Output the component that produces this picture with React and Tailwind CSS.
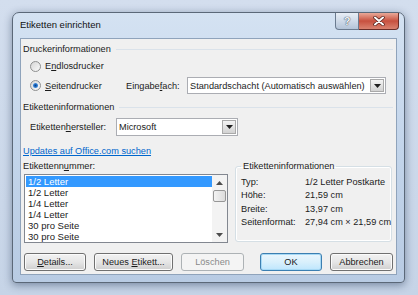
import React from 'react'

const listItems = ['1/2 Letter', '1/2 Letter', '1/4 Letter', '1/4 Letter', '30 pro Seite', '30 pro Seite']

const infoRows = [
  ['Typ:', '1/2 Letter Postkarte'],
  ['Höhe:', '21,59 cm'],
  ['Breite:', '13,97 cm'],
  ['Seitenformat:', '27,94 cm × 21,59 cm'],
]

function Header({ children }) {
  return (
    <div className="flex h-[12px] items-center pl-[2px] pr-[3px]">
      <span className="leading-[12px]">{children}</span>
      <div className="ml-[5px] h-px flex-1 bg-[#dae2ea]" />
    </div>
  )
}

function Radio({ checked, children }) {
  return (
    <div className="flex items-center gap-[4px]">
      <div className="flex h-[11px] w-[11px] items-center justify-center rounded-full border border-[#8e8f8f] bg-gradient-to-br from-[#d6d6d6] to-[#fafafa]">
        {checked && (
          <div className="h-[5px] w-[5px] rounded-full bg-[radial-gradient(circle,#0a3f86_0%,#2f7fd6_55%,#8cc6fb_100%)]" />
        )}
      </div>
      <span className="leading-[12px]">{children}</span>
    </div>
  )
}

function DownArrow() {
  return (
    <svg width="7" height="4" viewBox="0 0 7 4">
      <path d="M0 0h7L3.5 4z" fill="#1f1f1f" />
    </svg>
  )
}

function Combo({ text, className }) {
  return (
    <div className={'flex items-stretch border border-[#abadb3] bg-white ' + className}>
      <span className="flex-1 truncate pl-[2px] self-center leading-[12px]">{text}</span>
      <div className="my-px mr-px flex w-[14px] items-center justify-center border border-[#a9a9a9] bg-gradient-to-b from-[#f4f4f4] to-[#d2d2d2]">
        <DownArrow />
      </div>
    </div>
  )
}

function Button({ children, className = '', disabled, focused }) {
  return (
    <div
      className={
        'flex h-[18px] items-center justify-center rounded-[3px] border leading-[12px] ' +
        (disabled
          ? 'border-[#adb2b5] bg-[#f4f4f4] text-[#8a8a8a] '
          : focused
          ? 'border-[#3c7fb1] bg-gradient-to-b from-[#eaf6fd] via-[#d9f0fc] to-[#bee6fd] shadow-[inset_0_0_0_1px_#a7d9f5] '
          : 'border-[#707070] bg-gradient-to-b from-[#f2f2f2] via-[#e6e6e6] to-[#cfcfcf] shadow-[inset_0_0_0_1px_#fbfbfb] ') +
        className
      }
    >
      <span className="whitespace-nowrap">{children}</span>
    </div>
  )
}

export default function App() {
  return (
    <div className="h-[295px] w-[418px] bg-gradient-to-b from-[#d3deee] to-[#c6d4e7] p-[12px] font-['Liberation_Sans',Arial,sans-serif] text-[9.2px] text-[#1b1b1b]">
      <div className="flex h-[271px] w-[393px] flex-col rounded-t-[7px] rounded-b-[4px] border border-[#5b6878] bg-gradient-to-b from-[#d4e2f2] via-[#c3d5eb] to-[#b8cbe3] shadow-[0_2px_8px_rgba(20,40,70,0.45)]">
        {/* Title bar */}
        <div className="flex h-[25px] items-start justify-between">
          <span className="pl-[7px] pt-[6px] text-[9.5px] leading-[12px] text-[#111]">Etiketten einrichten</span>
          <div className="mr-[5px] flex">
            <div className="flex h-[17px] w-[24px] items-center justify-center rounded-bl-[4px] border border-t-0 border-[#6b7b8f] bg-gradient-to-b from-[#e8eef6] via-[#cfdae8] to-[#b4c4d8] text-[11px] font-bold text-[#f4f6f9] [text-shadow:0_0_1px_#3a4656,0_0_1px_#3a4656]">
              ?
            </div>
            <div className="flex h-[17px] w-[40px] items-center justify-center rounded-br-[4px] border border-l-0 border-t-0 border-[#6a2d28] bg-gradient-to-b from-[#e9a898] via-[#c7503f] to-[#d98270]">
              <svg width="12" height="10" viewBox="0 0 12 10">
                <path d="M2 1.5l8 7M10 1.5l-8 7" stroke="#4b1a15" strokeWidth="3.4" strokeLinecap="round" />
                <path d="M2 1.5l8 7M10 1.5l-8 7" stroke="#ffffff" strokeWidth="2" strokeLinecap="round" />
              </svg>
            </div>
          </div>
        </div>

        {/* Client area */}
        <div className="mx-[7px] flex flex-col border border-[#8fa3bb] bg-[#f0f0f0] pb-[3px] pt-[4px]">
          <Header>Druckerinformationen</Header>

          <div className="ml-[9px] mt-[5px] flex h-[12px] items-center">
            <Radio>
              E<u>n</u>dlosdrucker
            </Radio>
          </div>

          <div className="mt-[5px] flex h-[17px] items-center">
            <div className="ml-[9px] w-[96px]">
              <Radio checked>
                <u>S</u>eitendrucker
              </Radio>
            </div>
            <span className="w-[61px] leading-[12px]">
              Eingabe<u>f</u>ach:
            </span>
            <Combo text="Standardschacht (Automatisch auswählen)" className="h-[17px] w-[199px]" />
          </div>

          <div className="mt-[7px]">
            <Header>Etiketteninformationen</Header>
          </div>

          <div className="mt-[5px] flex h-[18px] items-center">
            <span className="ml-[9px] w-[86px] leading-[12px]">
              Etiketten<u>h</u>ersteller:
            </span>
            <Combo text="Microsoft" className="h-[18px] w-[122px]" />
          </div>

          <div className="ml-[2px] mt-[9px] h-[12px] leading-[12px]">
            <span className="text-[#0066cc] underline">Updates auf Office.com suchen</span>
          </div>

          <div className="mt-[3px] flex h-[83px] items-start">
            <div className="ml-[2px] flex flex-col">
              <span className="h-[12px] leading-[12px]">
                Etikettenn<u>u</u>mmer:
              </span>
              <div className="ml-px mt-[2px] flex h-[69px] w-[204px] border border-[#828790] bg-white">
                <div className="flex-1 pl-px pt-px">
                  {listItems.map((item, i) => (
                    <div
                      key={i}
                      className={
                        'h-[11px] pl-[2px] text-[9.5px] leading-[11px] ' + (i === 0 ? 'bg-[#3399ff] text-white' : '')
                      }
                    >
                      {item}
                    </div>
                  ))}
                </div>
                <div className="flex w-[15px] flex-col bg-[#f3f3f3]">
                  <div className="flex h-[15px] items-center justify-center">
                    <svg width="7" height="4" viewBox="0 0 7 4">
                      <path d="M0 4h7L3.5 0z" fill="#4d4d4d" />
                    </svg>
                  </div>
                  <div className="mx-px h-[12px] rounded-[2px] border border-[#979797] bg-gradient-to-r from-[#f3f3f3] to-[#dcdcdc]" />
                  <div className="flex-1" />
                  <div className="flex h-[15px] items-center justify-center">
                    <svg width="7" height="4" viewBox="0 0 7 4">
                      <path d="M0 0h7L3.5 4z" fill="#4d4d4d" />
                    </svg>
                  </div>
                </div>
              </div>
            </div>

            <fieldset className="ml-[7px] h-[82px] w-[157px] min-w-0 rounded-[3px] border border-[#d5dfe5] pl-[5px] shadow-[inset_0_0_0_1px_#ffffff]">
              <legend className="px-[2px] leading-[12px]">Etiketteninformationen</legend>
              <div className="mt-[4px] flex flex-col">
                {infoRows.map(([label, value]) => (
                  <div key={label} className="flex h-[13.5px] items-center whitespace-nowrap">
                    <span className="w-[64px] shrink-0">{label}</span>
                    <span>{value}</span>
                  </div>
                ))}
              </div>
            </fieldset>
          </div>

          <div className="mt-[10px] flex">
            <Button className="ml-[3px] w-[62px]">
              <u>D</u>etails...
            </Button>
            <Button className="ml-[8px] w-[79px]">
              Neues <u>E</u>tikett...
            </Button>
            <Button disabled className="ml-[8px] w-[63px]">
              Löschen
            </Button>
            <Button focused className="ml-[16px] w-[62px]">
              OK
            </Button>
            <Button className="ml-[8px] w-[63px]">Abbrechen</Button>
          </div>
        </div>
      </div>
    </div>
  )
}
